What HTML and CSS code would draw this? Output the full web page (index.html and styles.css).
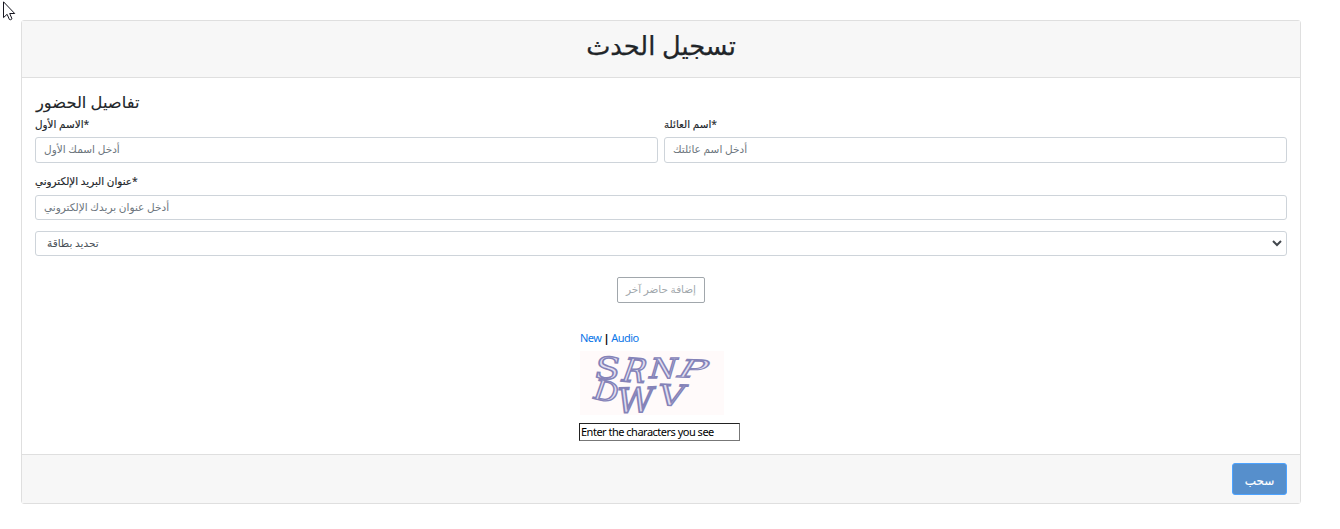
FILE: index.html
```html
<!DOCTYPE html>
<html lang="ar">
<head>
<meta charset="utf-8">
<title>تسجيل الحدث</title>
<link rel="stylesheet" href="styles.css">
</head>
<body>
<svg class="cursor" width="13" height="20" viewBox="0 0 13 20"><path d="M.5 .8V16.6L4.1 13.3L6.4 18.5Q7.5 19.3 9 17.8L6.7 12.5H11.7Z" fill="#fff" stroke="#15151f" stroke-width="1"/></svg>
<form class="card">
  <header class="card-header"><h1 class="title">تسجيل الحدث</h1></header>
  <main class="card-body">
    <h2 class="subtitle">تفاصيل الحضور</h2>
    <div class="row">
      <div class="field"><label class="label" for="first">الاسم الأول*</label><input class="control" id="first" placeholder="أدخل اسمك الأول"></div>
      <div class="field"><label class="label" for="last">اسم العائلة*</label><input class="control" id="last" placeholder="أدخل اسم عائلتك"></div>
    </div>
    <div class="field email"><label class="label" for="email">عنوان البريد الإلكتروني*</label><input class="control" id="email" placeholder="أدخل عنوان بريدك الإلكتروني"></div>
    <div class="control select"><span>تحديد بطاقة</span><svg width="10" height="7" viewBox="0 0 10 7"><path d="M1 1L5 5L9 1" fill="none" stroke="#42474d" stroke-width="2"/></svg></div>
    <button class="add" type="button">إضافة حاضر آخر</button>
    <section class="captcha">
      <div class="links"><a>New</a> <b>|</b> <a>Audio</a></div>
      <svg class="picture" width="144" height="64" viewBox="0 0 144 64">
        <g class="glyphs">
          <text transform="matrix(1.6 .1 -.25 1.3 13 27)">S</text>
          <text transform="matrix(1.35 .1 -.5 1.4 39 30)">R</text>
          <text transform="matrix(1.35 0 -.35 1.2 67 27)">N</text>
          <text transform="matrix(1.8 .05 -.65 1.05 94 26)">P</text>
          <text transform="matrix(1.3 .3 -.4 1.15 11 47)">D</text>
          <text transform="matrix(1.55 -.05 -.25 1.5 35 62)">W</text>
          <text transform="matrix(1.6 .05 -.3 1.25 76 54)">V</text>
        </g>
      </svg>
      <input class="answer" value="Enter the characters you see">
    </section>
  </main>
  <footer class="card-footer"><button class="submit" type="button">سحب</button></footer>
</form>
</body>
</html>
```
FILE: styles.css
```css
* { box-sizing: border-box; }
body { margin: 0; background: #fff; color: #212529; font-family: "Open Sans", "DejaVu Sans", sans-serif; }
.cursor { position: absolute; left: 3px; top: 1px; }
.card { margin: 20px 39px 0 21px; height: 484px; border: 1px solid #dfdfdf; border-radius: 3px; display: flex; flex-direction: column; }
.card-header { height: 57px; background: #f7f7f7; border-bottom: 1px solid #dfdfdf; display: flex; justify-content: center; }
.title { margin: 8px 0 0; font-size: 25.7px; line-height: 34px; font-weight: 400; -webkit-text-stroke: .25px currentColor; }
.card-body { height: 376px; padding: 13px 13px 0; display: flex; flex-direction: column; }
.subtitle { margin: 0; height: 25px; font-size: 16.3px; line-height: 22px; font-weight: 400; padding-left: 1px; -webkit-text-stroke: .1px currentColor; }
.row { display: flex; gap: 6px; }
.field { flex: 1; display: flex; flex-direction: column; }
.email { flex: none; margin-top: 10px; }
.label { height: 21px; font-size: 10.4px; line-height: 17px; white-space: nowrap; -webkit-text-stroke: .15px currentColor; }
.email .label { height: 22px; }
.control { width: 100%; height: 26px; border: 1px solid #ced4da; border-radius: 3px; padding: 0 8px 2px; background: #fff; font-family: inherit; font-size: 10.5px; color: #495057; }
.control::placeholder { color: #6c757d; opacity: 1; }
.email .control { height: 25px; padding-bottom: 2px; }
.select { margin-top: 11px; height: 25px; padding: 0 4px 0 11px; display: flex; align-items: center; justify-content: space-between; flex: none; }
.select span { padding-bottom: 2px; }
.add { align-self: center; margin-top: 21px; width: 88px; height: 26px; flex: none; border: 1px solid #a1a7ac; border-radius: 2px; background: #fff; color: #a1a7ac; padding: 0 0 2px; font-family: inherit; font-size: 10.4px; white-space: nowrap; }
.captcha { width: 161px; margin: 26px 0 0 544px; display: flex; flex-direction: column; align-items: flex-start; }
.links { height: 22px; font-family: "Noto Sans", sans-serif; font-size: 11px; line-height: 17px; letter-spacing: -.5px; word-spacing: -.3px; color: #000; padding-left: 1px; }
.links a { color: #0b76e8; }
.picture { background: #fffafa; margin-left: 1px; display: block; }
.glyphs { font-family: "DejaVu Serif", serif; font-size: 23px; fill: #e2dff1; stroke: #8583b8; stroke-width: 1.1; }
.answer { width: 161px; height: 18px; margin-top: 8px; border: 1px solid #777; border-top-color: #222; border-left-color: #222; border-radius: 0; padding: 0 1px 2px; font-family: "Noto Sans", sans-serif; font-size: 11px; letter-spacing: -.5px; color: #000; }
.card-footer { height: 49px; background: #f7f7f7; border-top: 1px solid #dfdfdf; display: flex; justify-content: flex-end; align-items: flex-start; padding: 8px 13px; }
.submit { width: 55px; height: 32px; border: 1px solid #4da3ff; border-radius: 3px; background: #568fcc; color: #fff; font-family: inherit; font-size: 12px; padding: 3px 0 0; -webkit-text-stroke: .15px currentColor; }
```
